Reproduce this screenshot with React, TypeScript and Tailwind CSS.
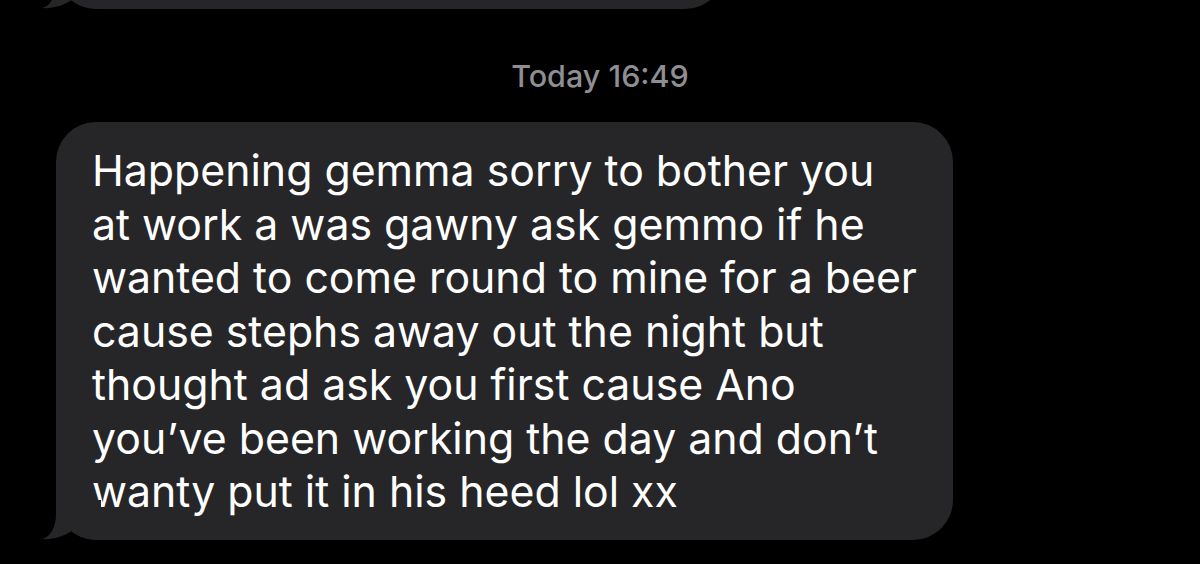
import React from 'react';

const lines = [
  'Happening gemma sorry to bother you',
  'at work a was gawny ask gemmo if he',
  'wanted to come round to mine for a beer',
  'cause stephs away out the night but',
  'thought ad ask you first cause Ano',
  'you\u2019ve been working the day and don\u2019t',
  'wanty put it in his heed lol xx',
];

const Tail: React.FC = () => (
  <svg
    className="absolute left-[-16px] bottom-0"
    width="62"
    height="40"
    viewBox="-16 -40 62 40"
  >
    <path
      d="M0 -40 L0 -26 C0 -12 -6 -3 -14 -1 C-3 0 9 -4 17 -10 C25 -3 33 0 45 0 L45 -40 Z"
      fill="#262628"
    />
  </svg>
);

const App: React.FC = () => {
  return (
    <div className="h-[564px] w-full overflow-hidden bg-black" style={{ fontFamily: 'Inter, "Liberation Sans", sans-serif' }}>
      {/* previous message, mostly scrolled away */}
      <div className="relative ml-[56px] -mt-[71px] h-[80px] w-[669px] rounded-[40px] bg-[#262628]">
        <Tail />
      </div>

      <div className="mt-[50px] text-center text-[30.5px] leading-[34px] font-medium text-[#8e8e93]">
        Today 16:49
      </div>

      <div className="relative ml-[56px] mt-[29px] w-[897px] rounded-[40px] bg-[#262628] pl-[36px] pt-[22px] pb-[21px]">
        <Tail />
        <div className="text-[42.8px] leading-[53.5px] text-white">
          {lines.map((l, i) => (
            <div key={i}>{l}</div>
          ))}
        </div>
      </div>
    </div>
  );
};

export default App;
